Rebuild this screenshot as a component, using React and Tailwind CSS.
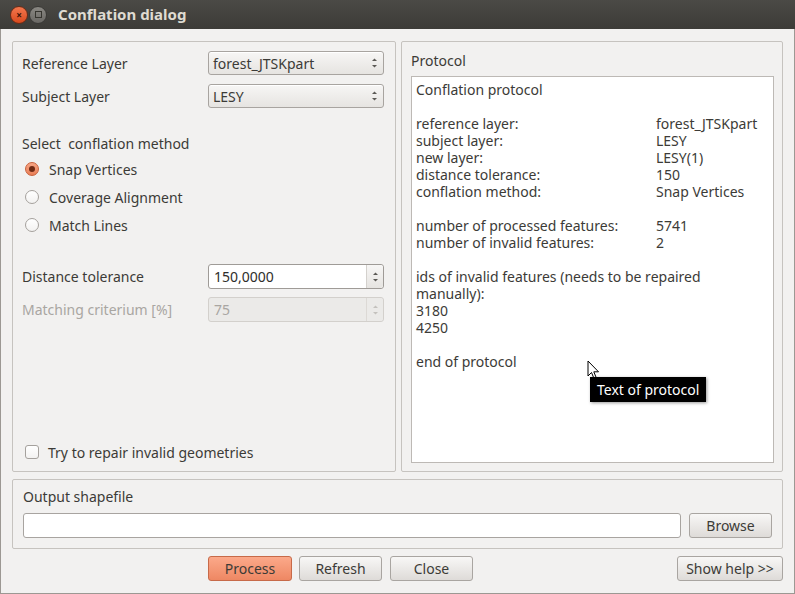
import React from "react";

const Arrows = ({ dim }) => (
  <svg width="7" height="12" viewBox="0 0 7 12" className="shrink-0">
    <path d="M1 4 L3.5 1.5 L6 4 Z" fill={dim ? "#c4c1bd" : "#5b5955"} />
    <path d="M1 8 L3.5 10.5 L6 8 Z" fill={dim ? "#c4c1bd" : "#5b5955"} />
  </svg>
);

const Combo = ({ value }) => (
  <div className="w-[176px] h-[24px] rounded-[3px] border border-[#a8a4a0] bg-gradient-to-b from-[#f7f6f5] to-[#e6e4e1] flex items-center justify-between pl-[4px] pr-[5px] text-[#3c3b37] shadow-[inset_0_1px_0_#ffffff]">
    <span>{value}</span>
    <Arrows />
  </div>
);

const Spin = ({ value, disabled }) => (
  <div
    className={
      "w-[176px] h-[25px] rounded-[3px] border flex items-stretch " +
      (disabled ? "border-[#d3d0cc] bg-[#ebeae8] text-[#a9a6a2]" : "border-[#9f9b97] bg-white text-[#2e2d2b]")
    }
  >
    <span className="flex-1 flex items-center pl-[5px]">{value}</span>
    <div
      className={
        "w-[17px] flex items-center justify-center border-l rounded-r-[3px] " +
        (disabled ? "border-[#dcd9d5] bg-[#ebeae8]" : "border-[#d4d1cd] bg-gradient-to-b from-[#f7f6f5] to-[#e6e4e1]")
      }
    >
      <Arrows dim={disabled} />
    </div>
  </div>
);

const Radio = ({ checked, label }) => (
  <div className="h-[28px] flex items-center pl-[3px] gap-[10px]">
    {checked ? (
      <span className="w-[14px] h-[14px] rounded-full border border-[#c8603a] bg-gradient-to-b from-[#f7a585] to-[#ea7f57] flex items-center justify-center">
        <span className="w-[6px] h-[6px] rounded-full bg-[#6e2a14]" />
      </span>
    ) : (
      <span className="w-[14px] h-[14px] rounded-full border border-[#a5a19d] bg-gradient-to-b from-white to-[#f3f2f1]" />
    )}
    <span>{label}</span>
  </div>
);

const Button = ({ children, primary, w }) => (
  <button
    className={
      "h-[25px] rounded-[3px] border flex items-center justify-center " +
      w +
      (primary
        ? " border-[#c76a49] bg-gradient-to-b from-[#fba98a] to-[#ee8763] text-[#3c3b37]"
        : " border-[#a9a5a1] bg-gradient-to-b from-[#f8f7f6] to-[#dedbd8] text-[#3c3b37]")
    }
  >
    {children}
  </button>
);

const rows = [
  ["reference layer:", "forest_JTSKpart"],
  ["subject layer:", "LESY"],
  ["new layer:", "LESY(1)"],
  ["distance tolerance:", "150"],
  ["conflation method:", "Snap Vertices"],
];

export default function App() {
  return (
    <div className="w-[795px] h-[594px] bg-[#f2f1f0] flex flex-col font-['Noto_Sans',sans-serif] text-[14px] text-[#3c3b37] leading-[17px] relative overflow-hidden">
      {/* title bar */}
      <div className="h-[29px] shrink-0 bg-gradient-to-b from-[#4b4a46] to-[#3c3b37] flex items-center pl-[10px]">
        <span className="w-[18px] h-[18px] rounded-full bg-gradient-to-b from-[#f3774d] to-[#d8491c] border border-[#6b2c17] flex items-center justify-center text-[#3a1307] text-[10px] font-bold leading-none">
          ×
        </span>
        <span className="ml-[1px] w-[18px] h-[18px] rounded-full bg-gradient-to-b from-[#8a8883] to-[#6a6864] border border-[#3a3936] flex items-center justify-center">
          <span className="w-[7px] h-[7px] border border-[#36352f]" />
        </span>
        <span className="ml-[11px] text-[#dfdbd2] font-bold text-[15px]">Conflation dialog</span>
      </div>

      <div className="flex-1 border-l border-r border-b border-[#9c9893] px-[11px] pt-[12px] flex flex-col">
        <div className="flex gap-[5px] h-[431px]">
          {/* left group */}
          <div className="w-[384px] border border-[#c6c3bf] rounded-[2px] flex flex-col pl-[9px] pr-[11px] pt-[10px] pb-[9px]">
            <div className="flex items-center h-[24px] -mt-[1px]">
              <span className="w-[186px]">Reference Layer</span>
              <Combo value="forest_JTSKpart" />
            </div>
            <div className="flex items-center h-[24px] mt-[9px]">
              <span className="w-[186px]">Subject Layer</span>
              <Combo value="LESY" />
            </div>
            <div className="mt-[27px] h-[17px]">Select&nbsp; conflation method</div>
            <div className="mt-[3px]">
              <Radio checked label="Snap Vertices" />
              <Radio label="Coverage Alignment" />
              <Radio label="Match Lines" />
            </div>
            <div className="flex items-center h-[25px] mt-[25px]">
              <span className="w-[186px]">Distance tolerance</span>
              <Spin value="150,0000" />
            </div>
            <div className="flex items-center h-[25px] mt-[8px]">
              <span className="w-[186px] text-[#a9a6a2]">Matching criterium [%]</span>
              <Spin value="75" disabled />
            </div>
            <div className="flex-1" />
            <div className="flex items-center gap-[9px] pl-[3px] h-[20px]">
              <span className="w-[14px] h-[14px] rounded-[3px] border border-[#a5a19d] bg-gradient-to-b from-white to-[#f3f2f1]" />
              <span>Try to repair invalid geometries</span>
            </div>
          </div>

          {/* right group */}
          <div className="w-[382px] border border-[#c6c3bf] rounded-[2px] flex flex-col pl-[9px] pr-[8px] pt-[10px] pb-[8px]">
            <div className="h-[17px]">Protocol</div>
            <div className="mt-[7px] flex-1 bg-white border border-[#bdb9b5] px-[4px] pt-[4px] text-[#3c3b37]">
              <div>Conflation protocol</div>
              <div className="h-[17px]" />
              {rows.map(([a, b]) => (
                <div key={a} className="flex">
                  <span className="w-[240px]">{a}</span>
                  <span>{b}</span>
                </div>
              ))}
              <div className="h-[17px]" />
              <div className="flex">
                <span className="w-[240px]">number of processed features:</span>
                <span>5741</span>
              </div>
              <div className="flex">
                <span className="w-[240px]">number of invalid features:</span>
                <span>2</span>
              </div>
              <div className="h-[17px]" />
              <div>ids of invalid features (needs to be repaired</div>
              <div>manually):</div>
              <div>3180</div>
              <div>4250</div>
              <div className="h-[17px]" />
              <div>end of protocol</div>
            </div>
          </div>
        </div>

        {/* output group */}
        <div className="mt-[7px] h-[70px] border border-[#c6c3bf] rounded-[2px] pl-[10px] pr-[10px] pt-[8px]">
          <div className="h-[17px]">Output shapefile</div>
          <div className="mt-[8px] flex items-center gap-[8px]">
            <div className="flex-1 h-[25px] rounded-[3px] border border-[#a8a4a0] bg-white" />
            <Button w="w-[83px]">Browse</Button>
          </div>
        </div>

        {/* buttons */}
        <div className="mt-[7px] flex items-center">
          <div className="w-[196px]" />
          <Button primary w="w-[84px]">Process</Button>
          <div className="w-[7px]" />
          <Button w="w-[83px]">Refresh</Button>
          <div className="w-[8px]" />
          <Button w="w-[83px]">Close</Button>
          <div className="flex-1" />
          <Button w="w-[106px]">Show help &gt;&gt;</Button>
        </div>
      </div>

      {/* cursor + tooltip */}
      <svg width="14" height="22" viewBox="0 0 14 22" className="absolute left-[587px] top-[360px]">
        <path d="M1 1 L1 16 L4.5 12.5 L7 18.5 L9.2 17.6 L6.8 11.8 L11.5 11.8 Z" fill="white" stroke="black" strokeWidth="1" strokeLinejoin="round" />
      </svg>
      <div className="absolute left-[590px] top-[377px] h-[25px] px-[7px] bg-black text-white flex items-center shadow-[1px_1px_3px_rgba(0,0,0,0.4)]">
        Text of protocol
      </div>
    </div>
  );
}
